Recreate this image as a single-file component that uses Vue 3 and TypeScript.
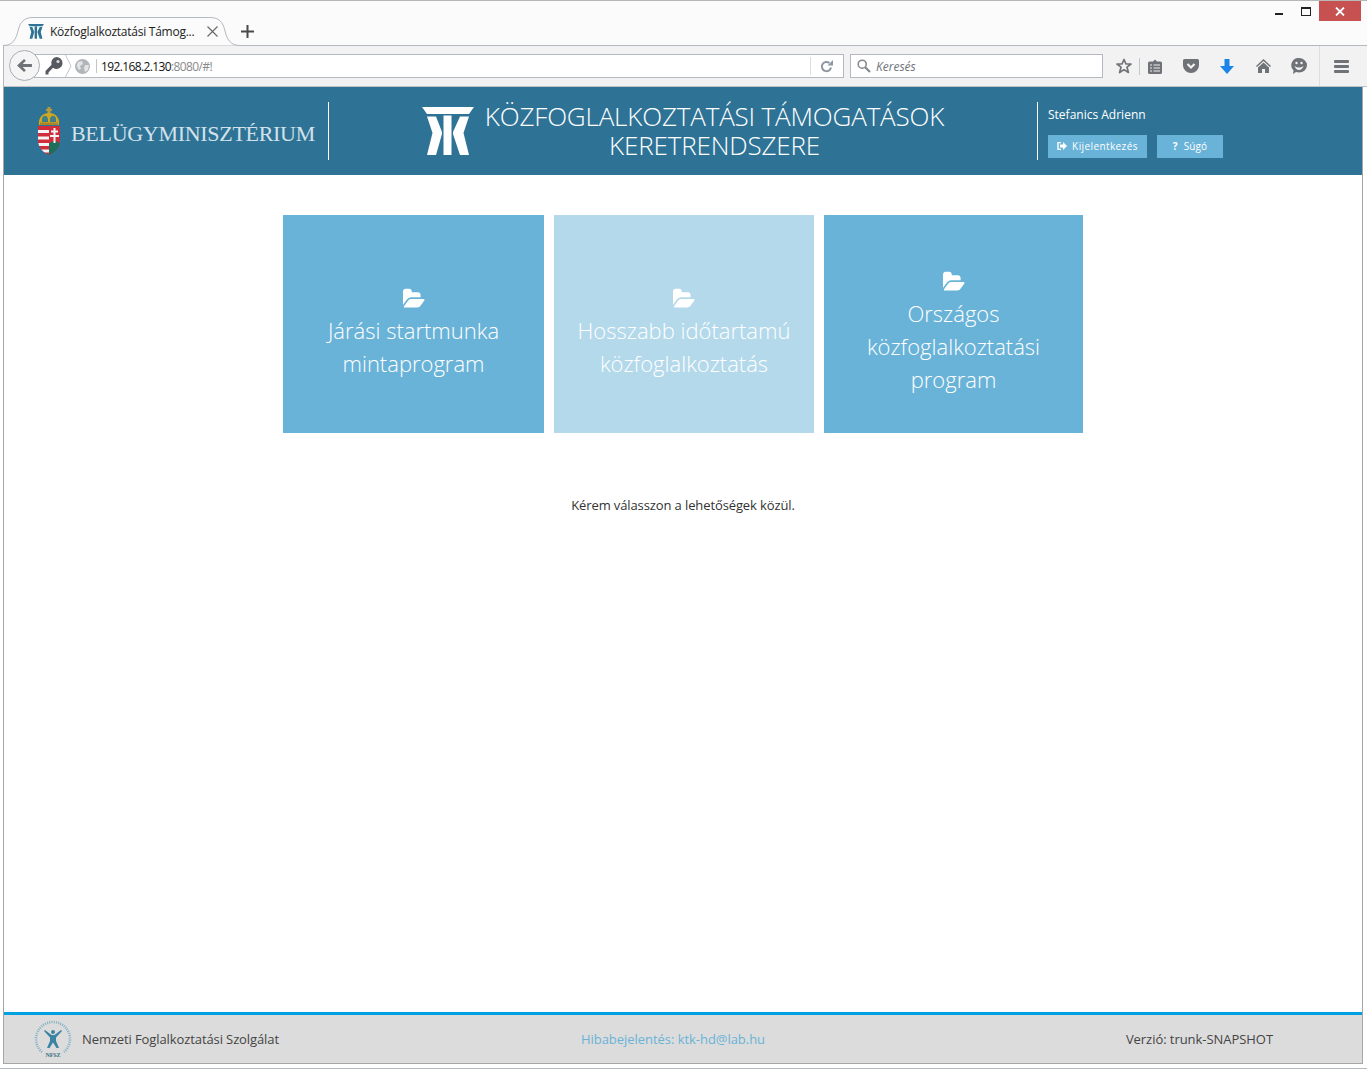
<script setup lang="ts">
const tiles = [
  { id: 1, lines: ['Járási startmunka', 'mintaprogram'], disabled: false },
  { id: 2, lines: ['Hosszabb időtartamú', 'közfoglalkoztatás'], disabled: true },
  { id: 3, lines: ['Országos', 'közfoglalkoztatási', 'program'], disabled: false },
]
const folderPath =
  'M1879 952q0 31-31 66l-336 396q-43 51-120.5 86.5t-143.5 35.5h-1088q-34 0-60.5-13t-26.5-43q0-31 31-66l336-396q43-51 120.5-86.5t143.5-35.5h1088q34 0 60.5 13t26.5 43zm-343-344v160h-832q-94 0-197 47.5t-164 119.5l-337 396-5 6q0-4-.5-12.5t-.5-12.5v-960q0-92 66-158t158-66h320q92 0 158 66t66 158v32h544q92 0 158 66t66 158z'
const ktkPath =
  'M0 0H52L47 7H5Z M5 9.500H14L20 25V27L14 48H5L10.500 26Z M21.500 8.500H29.500V48H21.500Z M47 9.500H38L31 25V27L38 48H47L41.500 26Z'
</script>

<template>
  <div class="window">
    <div class="titlebar">
      <div class="tab">
        <svg class="tab-shape" width="237" height="29" viewBox="0 0 237 29">
          <path d="M0 28.500C10 28.500 13 22 15 14C17 5 21 .5 30 .5H207C216 .5 220 5 222 14C224 22 227 28.500 237 28.500" fill="#fbfbfb" stroke="#b4b8c0" />
        </svg>
        <svg class="tab-icon" width="16" height="15" viewBox="0 0 52 49"><path :d="ktkPath" fill="#2e7396" /></svg>
        <span class="tab-title">Közfoglalkoztatási Támog...</span>
        <svg class="tab-close" width="11" height="11" viewBox="0 0 11 11">
          <path d="M.5 .5L10.500 10.500M10.500 .5L.5 10.500" stroke="#6a6a6a" stroke-width="1.200" />
        </svg>
      </div>
      <svg class="new-tab" width="13" height="13" viewBox="0 0 13 13">
        <path d="M6.500 0V13M0 6.500H13" stroke="#4a4a4a" stroke-width="2" />
      </svg>
      <div class="win-controls">
        <span class="win-min"></span>
        <span class="win-max"></span>
        <span class="win-close">
          <svg width="10" height="9" viewBox="0 0 10 9"><path d="M1 .5L9 8.500M9 .5L1 8.500" stroke="#fff" stroke-width="1.800" /></svg>
        </span>
      </div>
    </div>

    <div class="navbar">
      <div class="back">
        <svg width="15" height="13" viewBox="0 0 16 14"><path d="M7.500 0L0 7L7.500 14L9.500 12L6 8.700H16V5.300H6L9.500 2Z" fill="#6f7378" /></svg>
      </div>
      <div class="urlbar">
        <svg class="key" width="18" height="18" viewBox="0 0 18 18">
          <path d="M11.500 0A6 6 0 0 1 17.500 6A6 6 0 0 1 8 10.800L3.500 15.500L3.500 17.500H.5V14L6.500 7.800A6 6 0 0 1 11.500 0Z" fill="#565a60" />
          <circle cx="13" cy="4.500" r="1.600" fill="#d8dade" />
        </svg>
        <svg class="chevron" width="7" height="24" viewBox="0 0 7 24"><path d="M.5 1L6 12L.5 23" fill="none" stroke="#c3c6cb" /></svg>
        <svg class="globe" width="15" height="15" viewBox="0 0 15 15">
          <circle cx="7.500" cy="7.500" r="7.500" fill="#b2b5b9" />
          <path d="M3 3L7 2L8 5L5 7L6 10L4 11L1.500 7Z M10 6L14 6L13 11L10 13L9 9Z" fill="#e3e4e6" />
        </svg>
        <span class="url-sep"></span>
        <span class="url"><b>192.168.2.130</b>:8080/#!</span>
        <span class="reload-sep"></span>
        <svg class="reload" width="13" height="13" viewBox="0 0 13 13">
          <path d="M11 7.500A4.600 4.600 0 1 1 9.400 3" fill="none" stroke="#8c97a3" stroke-width="2" />
          <path d="M7.500 5.500H13V0Z" fill="#8c97a3" />
        </svg>
      </div>
      <div class="searchbar">
        <svg width="14" height="14" viewBox="0 0 14 14">
          <circle cx="5.200" cy="5.200" r="4" fill="none" stroke="#85888d" stroke-width="1.600" />
          <path d="M8.200 8.200L13 13" stroke="#85888d" stroke-width="2.200" />
        </svg>
        <span>Keresés</span>
      </div>
      <div class="toolbar">
        <svg class="t-star" width="16" height="16" viewBox="0 0 16 16">
          <path d="M8 1.500L10 6H15L11 9.200L12.400 14.500L8 11.600L3.600 14.500L5 9.200L1 6H6Z" fill="none" stroke="#6f7378" stroke-width="1.700" stroke-linejoin="round" />
        </svg>
        <span class="t-sep"></span>
        <svg class="t-list" width="14" height="15" viewBox="0 0 14 15">
          <path d="M1.500 2.500H5L7 .5L9 2.500H12.500A1.500 1.500 0 0 1 14 4V13.500A1.500 1.500 0 0 1 12.500 15H1.500A1.500 1.500 0 0 1 0 13.500V4A1.500 1.500 0 0 1 1.500 2.500Z" fill="#6f7378" />
          <path d="M2 6H4M5.500 6H12M2 9H4M5.500 9H12M2 12H4M5.500 12H12" stroke="#eee" stroke-width="1.200" />
        </svg>
        <svg class="t-pocket" width="16" height="14" viewBox="0 0 16 14">
          <path d="M1.500 0H14.500A1.500 1.500 0 0 1 16 1.500V6.500A8 7.500 0 0 1 0 6.500V1.500A1.500 1.500 0 0 1 1.500 0Z" fill="#6f7378" />
          <path d="M4.500 5L8 8.500L11.500 5" fill="none" stroke="#f2f2f2" stroke-width="2.200" />
        </svg>
        <svg class="t-down" width="14" height="15" viewBox="0 0 14 15"><path d="M4.500 0H9.500V7H14L7 15L0 7H4.500Z" fill="#1a84e8" /></svg>
        <svg class="t-home" width="15" height="14" viewBox="0 0 15 14">
          <path d="M7.500 0L15 7L14 8L7.500 2L1 8L0 7Z M7.500 3.500L13 8.500V14H9V10H6V14H2V8.500Z" fill="#6f7378" />
        </svg>
        <svg class="t-chat" width="16" height="16" viewBox="0 0 16 16">
          <path d="M8 0A8 7.300 0 0 1 8 14.600C7 14.600 6 14.400 5 14.100L2 16L2.500 12.500A7.300 7.300 0 0 1 8 0Z" fill="#6f7378" />
          <circle cx="5.500" cy="5" r="1.200" fill="#f2f2f2" /><circle cx="10.500" cy="5" r="1.200" fill="#f2f2f2" />
          <path d="M3.500 8Q8 11 12.500 8Q11 12 8 12Q5 12 3.500 8Z" fill="#f2f2f2" />
        </svg>
        <span class="t-bigsep"></span>
        <span class="t-menu"><i></i><i></i><i></i></span>
      </div>
    </div>

    <div class="app">
      <header class="head">
        <div class="brand">
          <svg class="arms" width="24" height="48" viewBox="0 0 24 48">
            <defs>
              <clipPath id="shield"><path d="M1 19H23V33C23 41 17 46 12 48C7 46 1 41 1 33Z" /></clipPath>
            </defs>
            <path d="M10.500 0H13.500V2H15V4H13.500V7H10.500V4H9V2H10.500Z" fill="#b89a3a" />
            <path d="M2 18C1 10 6 6 12 6C18 6 23 10 22 18Z" fill="#d0a81f" />
            <path d="M5 11C7 8 10 8 11 12V15H5ZM13 12C14 8 17 8 19 11V15H13Z" fill="#3f7f86" />
            <path d="M3 15.500H21V18H3Z" fill="#a8862a" />
            <g clip-path="url(#shield)">
              <path d="M1 19H12V48H1Z" fill="#d22c3a" />
              <path d="M1 23H12V26H1ZM1 29.500H12V32.500H1ZM1 36H12V39H1ZM1 42.500H12V45.500H1Z" fill="#f4f4f4" />
              <path d="M12 19H23V48H12Z" fill="#d22c3a" />
              <path d="M12 37C15 33 20 33 23 37V48H12Z" fill="#1c6f58" />
            </g>
            <path d="M16.500 21H18.500V23.500H21V25.500H18.500V28H22V30H18.500V36H16.500V30H13V28H16.500V25.500H14V23.500H16.500Z" fill="#f4f4f4" />
          </svg>
          <span class="ministry">BELÜGYMINISZTÉRIUM</span>
        </div>
        <div class="title-wrap">
          <svg class="ktk" width="52" height="49" viewBox="0 0 52 49"><path :d="ktkPath" fill="#fff" /></svg>
          <h1 class="title">KÖZFOGLALKOZTATÁSI TÁMOGATÁSOK<br />KERETRENDSZERE</h1>
        </div>
        <div class="user">
          <div class="user-name">Stefanics Adrienn</div>
          <div class="user-btns">
            <a class="btn btn-out">
              <svg width="10" height="8" viewBox="0 0 10 8">
                <path d="M4 .5H1V7.500H4" fill="none" stroke="#fff" stroke-width="1.400" />
                <path d="M3 2.500H6V0L10 4L6 8V5.500H3Z" fill="#fff" />
              </svg>
              <span>Kijelentkezés</span>
            </a>
            <a class="btn btn-help"><b>?</b><span>Súgó</span></a>
          </div>
        </div>
      </header>

      <main class="content">
        <div class="tiles">
          <div v-for="t in tiles" :key="t.id" class="tile" :class="{ off: t.disabled }">
            <svg class="folder" width="22" height="24" viewBox="0 0 1920 1792" preserveAspectRatio="none"><path :d="folderPath" fill="#fff" /></svg>
            <div v-for="l in t.lines" :key="l" class="tile-line">{{ l }}</div>
          </div>
        </div>
        <p class="hint">Kérem válasszon a lehetőségek közül.</p>
      </main>

      <footer class="foot">
        <svg class="nfsz" width="38" height="38" viewBox="0 0 38 38">
          <path d="M8 32A17 17 0 1 1 30 32" fill="none" stroke="#7fb0c2" stroke-width="2.500" stroke-dasharray="1 1.200" />
          <path d="M11 10L17.500 15H20.500L27 10L28 11L22 17.500V21L25 28H22.500L19 22.500L15.500 28H13L16 21V17.500L10 11Z" fill="#3d84a3" />
          <circle cx="19" cy="12" r="2" fill="#3d84a3" />
          <text x="19" y="36.500" text-anchor="middle" class="nfsz-text">NFSZ</text>
        </svg>
        <span class="foot-left">Nemzeti Foglalkoztatási Szolgálat</span>
        <a class="foot-link">Hibabejelentés: ktk-hd@lab.hu</a>
        <span class="foot-right">Verzió: trunk-SNAPSHOT</span>
      </footer>
    </div>
    <div class="bottom-gap"></div>
  </div>
</template>

<style scoped>
.window {
  width: 1367px;
  height: 1072px;
  display: flex;
  flex-direction: column;
  background: #fff;
  font-family: 'Open Sans', sans-serif;
  overflow: hidden;
}

.titlebar {
  height: 45px;
  flex: none;
  box-sizing: border-box;
  background: #fbfbfb;
  border-top: 1px solid #b8b8b8;
  display: flex;
  align-items: flex-end;
  position: relative;
}
.tab {
  position: relative;
  width: 237px;
  height: 29px;
  margin-left: 3px;
  margin-bottom: -1px;
  display: flex;
  align-items: center;
  z-index: 1;
}
.tab-shape {
  position: absolute;
  left: 0;
  top: 0;
}
.tab-icon {
  position: relative;
  margin-left: 25px;
}
.tab-title {
  position: relative;
  margin-left: 6px;
  font-size: 12px;
  letter-spacing: -0.25px;
  color: #222;
  white-space: nowrap;
  width: 150px;
}
.tab-close {
  position: relative;
  margin-left: 7px;
}
.new-tab {
  margin: 0 0 7px 1px;
}
.win-controls {
  position: absolute;
  top: 0;
  right: 6px;
  display: flex;
  align-items: flex-start;
}
.win-min {
  width: 8px;
  height: 2px;
  background: #222;
  margin: 12px 18px 0 0;
}
.win-max {
  width: 8px;
  height: 6px;
  border: 1px solid #222;
  border-top-width: 2px;
  margin: 6px 8px 0 0;
}
.win-close {
  width: 42px;
  height: 20px;
  background: #c75050;
  display: flex;
  align-items: center;
  justify-content: center;
}

.navbar {
  height: 42px;
  flex: none;
  box-sizing: border-box;
  background: #f2f2f2;
  border-top: 1px solid #b4b8c0;
  border-bottom: 1px solid #c0c2c6;
  margin: 0 0 0 3px;
  border-left: 1px solid #b4b8c0;
  display: flex;
  align-items: center;
  position: relative;
}
.back {
  position: absolute;
  left: 5px;
  top: 4px;
  width: 31px;
  height: 31px;
  box-sizing: border-box;
  border: 1px solid #a9adb4;
  border-radius: 50%;
  background: #f5f5f5;
  display: flex;
  align-items: center;
  justify-content: center;
  z-index: 1;
}
.urlbar {
  margin-left: 30px;
  width: 810px;
  height: 24px;
  box-sizing: border-box;
  background: #fff;
  border: 1px solid #b4b8c0;
  border-left: none;
  display: flex;
  align-items: center;
}
.key {
  margin-left: 11px;
}
.chevron {
  margin-left: 2px;
}
.globe {
  margin-left: 3px;
}
.url-sep {
  width: 1px;
  height: 14px;
  background: #c3c6cb;
  margin-left: 6px;
}
.url {
  margin-left: 4px;
  font-size: 12px;
  letter-spacing: -0.62px;
  color: #8a8a8a;
  width: 709px;
}
.url b {
  font-weight: 400;
  color: #111;
}
.reload-sep {
  width: 1px;
  height: 18px;
  background: #dcdde0;
}
.reload {
  margin-left: 9px;
}
.searchbar {
  margin-left: 6px;
  width: 253px;
  height: 24px;
  box-sizing: border-box;
  background: #fff;
  border: 1px solid #b4b8c0;
  display: flex;
  align-items: center;
  padding-left: 6px;
  font-size: 12px;
  font-style: italic;
  color: #6f7378;
}
.searchbar span {
  margin-left: 5px;
}
.toolbar {
  display: flex;
  align-items: center;
  height: 100%;
  flex: 1;
  padding-left: 13px;
}
.t-sep {
  width: 1px;
  height: 17px;
  background: #c3c6cb;
  margin: 0 8px 0 7px;
}
.t-pocket {
  margin-left: 21px;
}
.t-down {
  margin-left: 21px;
}
.t-home {
  margin-left: 22px;
}
.t-chat {
  margin-left: 20px;
}
.t-bigsep {
  width: 1px;
  height: 100%;
  background: #dfdfe1;
  margin-left: 12px;
}
.t-menu {
  margin-left: 14px;
  display: flex;
  flex-direction: column;
  gap: 2px;
}
.t-menu i {
  display: block;
  width: 15px;
  height: 3px;
  border-radius: 1px;
  background: #6f7378;
}

.app {
  flex: 1;
  min-height: 0;
  margin-left: 3px;
  margin-right: 4px;
  border-left: 1px solid #a6a6a6;
  border-right: 1px solid #a6a6a6;
  border-bottom: 1px solid #a6a6a6;
  display: flex;
  flex-direction: column;
}

.head {
  height: 88px;
  flex: none;
  background: #2e7396;
  display: flex;
  align-items: center;
  color: #fff;
}
.brand {
  width: 325px;
  height: 58px;
  box-sizing: border-box;
  border-right: 1px solid #fff;
  display: flex;
  align-items: center;
  padding-left: 33px;
}
.ministry {
  margin-left: 10px;
  margin-top: 5px;
  font-family: 'Liberation Serif', serif;
  font-size: 22px;
  letter-spacing: -0.3px;
  color: #d3e2ea;
  white-space: nowrap;
}
.title-wrap {
  width: 708px;
  display: flex;
  align-items: center;
  justify-content: center;
  gap: 11px;
}
.title {
  margin: 0;
  font-size: 26px;
  font-weight: 300;
  letter-spacing: -0.16px;
  line-height: 29px;
  text-align: center;
  white-space: nowrap;
}
.user {
  height: 58px;
  box-sizing: border-box;
  border-left: 1px solid #fff;
  padding-left: 10px;
  padding-top: 1px;
}
.user-name {
  font-size: 12px;
  line-height: 24px;
}
.user-btns {
  display: flex;
  gap: 10px;
  margin-top: 8px;
}
.btn {
  height: 23px;
  padding-bottom: 2px;
  background: #6ab3d8;
  display: flex;
  align-items: center;
  justify-content: center;
  gap: 5px;
  font-size: 10px;
  letter-spacing: 0.4px;
  color: #fff;
  box-sizing: border-box;
}
.btn-out {
  width: 99px;
}
.btn-help {
  width: 66px;
  gap: 6px;
  letter-spacing: 0.1px;
}

.content {
  flex: 1;
  display: flex;
  flex-direction: column;
  align-items: center;
  padding-top: 40px;
}
.tiles {
  width: 800px;
  display: grid;
  grid-template-columns: 261px 260px 259px;
  gap: 10px;
}
.tile {
  height: 218px;
  box-sizing: border-box;
  padding-top: 18px;
  background: #6ab3d8;
  color: #fff;
  display: flex;
  flex-direction: column;
  align-items: center;
  justify-content: center;
  font-size: 22px;
  font-weight: 300;
  line-height: 33px;
}
.tile.off {
  background: #b4d9eb;
}
.folder {
  margin-bottom: 3px;
}
.tile-line {
  white-space: nowrap;
}
.hint {
  margin: 63px 0 0;
  font-size: 13px;
  letter-spacing: -0.11px;
  line-height: 18px;
  color: #333;
}

.foot {
  height: 48px;
  flex: none;
  border-top: 3px solid #009fdf;
  background: #dcdcdc;
  display: flex;
  align-items: center;
  padding-left: 30px;
  padding-right: 89px;
  font-size: 13px;
  letter-spacing: -0.1px;
  color: #444;
}
.nfsz-text {
  font-family: 'Liberation Serif', serif;
  font-size: 6px;
  font-weight: 700;
  fill: #3a6e85;
}
.foot-left {
  margin-left: 10px;
}
.foot-link {
  margin-left: 302px;
  letter-spacing: -0.04px;
  color: #6ab3d8;
}
.foot-right {
  margin-left: auto;
  letter-spacing: -0.05px;
}
.bottom-gap {
  height: 5px;
  margin-bottom: 3px;
  flex: none;
  box-sizing: border-box;
  border-bottom: 1px solid #b4b8c0;
}
</style>
